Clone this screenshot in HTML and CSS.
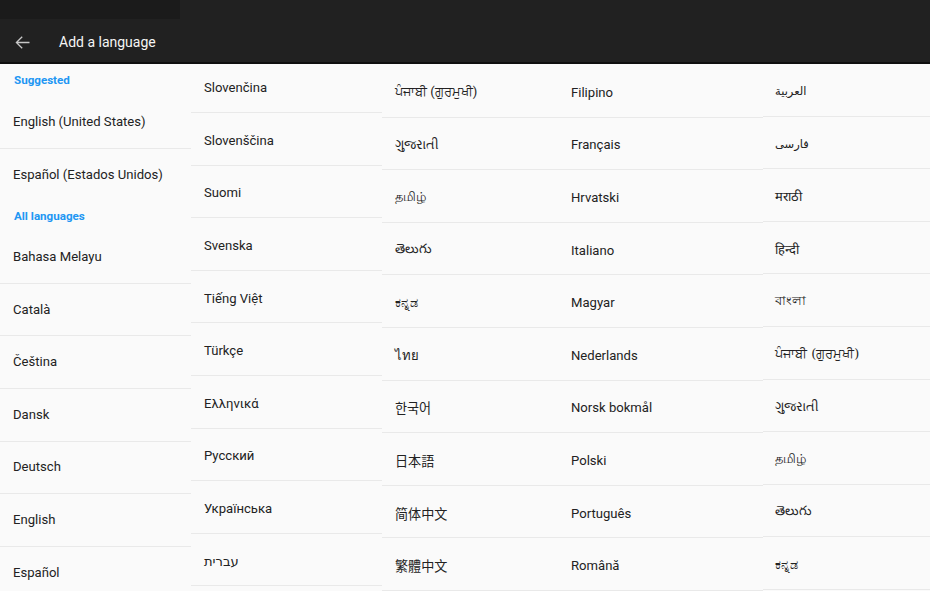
FILE: index.html
```html
<!DOCTYPE html>
<html lang="en">
<head>
<meta charset="utf-8">
<title>Add a language</title>
<link rel="stylesheet" href="styles.css">
</head>
<body>
<header class="appbar">
  <div class="statusbar"><div class="status-chunk"></div></div>
  <div class="toolbar">
    <svg class="back" viewBox="0 0 24 24" width="21" height="21" aria-hidden="true"><path d="M20 11.25H6.9l5.3-5.3-1.06-1.06L4 12l7.14 7.11 1.06-1.06-5.3-5.3H20z" fill="currentColor"/></svg>
    <h1 class="title">Add a language</h1>
  </div>
</header>
<main class="columns">
  <section class="col col-a">
    <div class="list">
      <div class="section-head">Suggested</div>
      <div class="row">English (United States)</div>
      <div class="row last">Español (Estados Unidos)</div>
      <div class="section-head head-all">All languages</div>
      <div class="row">Bahasa Melayu</div>
      <div class="row">Català</div>
      <div class="row">Čeština</div>
      <div class="row">Dansk</div>
      <div class="row">Deutsch</div>
      <div class="row">English</div>
      <div class="row">Español</div>
    </div>
  </section>
  <section class="col col-b">
    <div class="list shift-up">
      <div class="row">Slovenčina</div>
      <div class="row">Slovenščina</div>
      <div class="row">Suomi</div>
      <div class="row">Svenska</div>
      <div class="row">Tiếng Việt</div>
      <div class="row">Türkçe</div>
      <div class="row">Ελληνικά</div>
      <div class="row">Русский</div>
      <div class="row">Українська</div>
      <div class="row">עברית</div>
    </div>
  </section>
  <section class="col col-c">
    <div class="list shift-down">
      <div class="row">ਪੰਜਾਬੀ (ਗੁਰਮੁਖੀ)</div>
      <div class="row">ગુજરાતી</div>
      <div class="row">தமிழ்</div>
      <div class="row">తెలుగు</div>
      <div class="row">ಕನ್ನಡ</div>
      <div class="row">ไทย</div>
      <div class="row cjk-kr">한국어</div>
      <div class="row cjk-jp">日本語</div>
      <div class="row cjk-sc">简体中文</div>
      <div class="row cjk-tc">繁體中文</div>
    </div>
  </section>
  <section class="col col-d">
    <div class="list shift-down">
      <div class="row">Filipino</div>
      <div class="row">Français</div>
      <div class="row">Hrvatski</div>
      <div class="row">Italiano</div>
      <div class="row">Magyar</div>
      <div class="row">Nederlands</div>
      <div class="row">Norsk bokmål</div>
      <div class="row">Polski</div>
      <div class="row">Português</div>
      <div class="row">Română</div>
    </div>
  </section>
  <section class="col col-e">
    <div class="list">
      <div class="row script-row arabic">العربية</div>
      <div class="row script-row arabic">فارسی</div>
      <div class="row script-row">मराठी</div>
      <div class="row script-row">हिन्दी</div>
      <div class="row script-row">বাংলা</div>
      <div class="row script-row">ਪੰਜਾਬੀ (ਗੁਰਮੁਖੀ)</div>
      <div class="row script-row">ગુજરાતી</div>
      <div class="row script-row">தமிழ்</div>
      <div class="row script-row">తెలుగు</div>
      <div class="row script-row">ಕನ್ನಡ</div>
    </div>
  </section>
</main>
</body>
</html>
```

FILE: styles.css
```css
html, body {
  margin: 0;
  padding: 0;
  background: #ffffff;
}
body {
  width: 930px;
  height: 600px;
  overflow: hidden;
  font-family: Roboto, "Noto Sans", "DejaVu Sans", sans-serif;
  color: #222222;
}

.appbar {
  height: 62px;
  background: #212121;
  border-bottom: 2px solid #0f0f0f;
  display: flex;
  flex-direction: column;
}
.statusbar {
  height: 19px;
  display: flex;
}
.status-chunk {
  width: 180px;
  background: #1b1b1b;
}
.toolbar {
  flex: 1;
  display: flex;
  align-items: center;
  padding-left: 12px;
  padding-top: 3px;
}
.back {
  color: #c8c8c8;
  display: block;
}
.title {
  margin: 0 0 0 26px;
  font-size: 14px;
  font-weight: 400;
  color: #f5f5f5;
  letter-spacing: 0;
}

.columns {
  display: flex;
  height: 527px;
}
.col {
  background: #fafafa;
  overflow: hidden;
}
.col-a { width: 191px; }
.col-b { width: 191px; }
.col-c { width: 176px; }
.col-d { width: 205px; }
.col-e { width: 167px; }

.list {
  display: flex;
  flex-direction: column;
}
.shift-up { margin-top: -3.6px; }
.shift-down { margin-top: 1px; }

.row {
  box-sizing: border-box;
  height: 52.6px;
  flex: none;
  display: flex;
  align-items: center;
  padding-left: 13px;
  padding-bottom: 1px;
  border-bottom: 1.5px solid #e9e9e9;
  font-size: 13.1px;
  white-space: nowrap;
}
.row.last {
  border-bottom: none;
}
.col-b .row,
.col-c .row,
.col-d .row,
.col-e .row {
  padding-bottom: 0;
  padding-top: 3px;
}
.col-e .row { padding-left: 12px; }

.section-head {
  box-sizing: border-box;
  height: 32px;
  display: flex;
  align-items: center;
  padding-left: 14px;
  font-size: 11.6px;
  font-weight: 700;
  color: #2196f3;
}
.head-all {
  height: 30px;
}

.cjk-kr { font-family: Roboto, "Noto Sans CJK KR", sans-serif; }
.cjk-jp { font-family: Roboto, "Noto Sans CJK JP", sans-serif; }
.cjk-sc { font-family: Roboto, "Noto Sans CJK SC", sans-serif; }
.cjk-tc { font-family: Roboto, "Noto Sans CJK TC", sans-serif; }

.script-row {
  font-size: 13px;
  font-family: "DejaVu Serif", "Noto Serif", serif;
}
.script-row.arabic {
  font-size: 11.5px;
  font-family: "DejaVu Sans", sans-serif;
}
```
